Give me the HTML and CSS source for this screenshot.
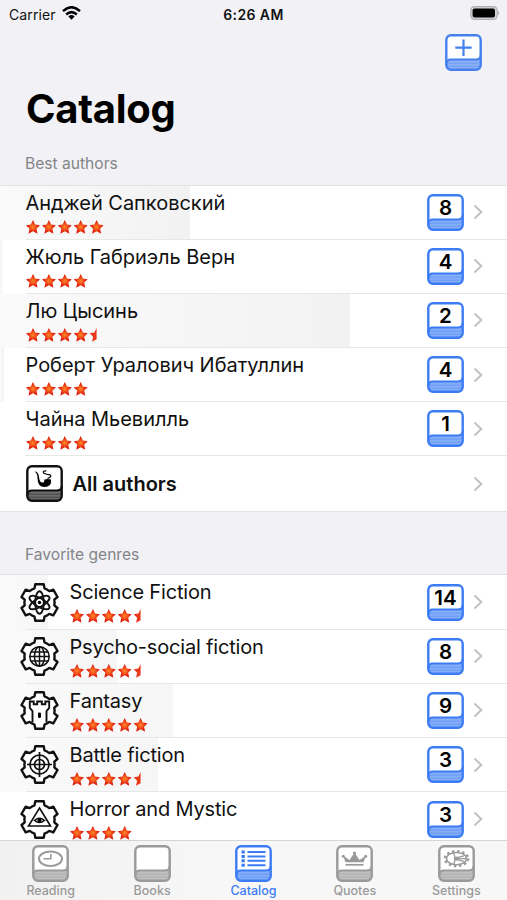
FILE: index.html
```html
<!DOCTYPE html>
<html lang="en">
<head>
  <meta charset="UTF-8">
  <meta name="viewport" content="width=device-width, initial-scale=1.0">
  <title>Catalog</title>
  <link rel="stylesheet" href="styles.css">
</head>
<body>
  <!-- Shared icons -->
  <svg class="defs" width="0" height="0">
    <defs>
      <radialGradient id="fire">
        <stop offset="0" stop-color="#ff8a2a"/>
        <stop offset="0.35" stop-color="#f4581c"/>
        <stop offset="0.8" stop-color="#dd1f10"/>
      </radialGradient>
    </defs>
    <symbol id="book" viewBox="0 0 37 37">
      <rect x="1.3" y="1.3" width="34.4" height="34.4" rx="4.6" fill="#fff"/>
      <path d="M1.3 30Q1.3 25.6 6 25.6H30.5Q35.7 25.6 35.7 21V31Q35.7 35.7 31 35.7H6Q1.3 35.7 1.3 30Z" fill="currentColor" opacity="0.62"/>
      <path d="M3 29.2H34M3 32.2H34" stroke="currentColor" stroke-width="0.8" opacity="0.5"/>
      <path d="M1.3 30.5Q1.3 25.6 6 25.6H30.5Q35.7 25.6 35.7 21" fill="none" stroke="currentColor" stroke-width="2"/>
      <rect x="1.3" y="1.3" width="34.4" height="34.4" rx="4.6" fill="none" stroke="currentColor" stroke-width="2.4"/>
    </symbol>
    <symbol id="gear" viewBox="-19.5 -19.5 39 39">
      <path d="M-4.2-18.3H4.2L5-14.2Q7.5-13.2 9.8-11.4L13.8-12.8L18-5.5L14.8-2.8Q15.3 0 14.8 2.8L18 5.5L13.8 12.8L9.8 11.4Q7.5 13.2 5 14.2L4.2 18.3H-4.2L-5 14.2Q-7.5 13.2-9.8 11.4L-13.8 12.8L-18 5.5L-14.8 2.8Q-15.3 0-14.8-2.8L-18-5.5L-13.8-12.8L-9.8-11.4Q-7.5-13.2-5-14.2Z" fill="#fff" stroke="#111" stroke-width="2.4" stroke-linejoin="round"/>
    </symbol>
    <symbol id="star" viewBox="0 0 14 14">
      <path d="M7 0L9.200 4.600L14 5.200L10.500 8.700L11.500 13.800L7 11.300L2.500 13.800L3.500 8.700L0 5.200L4.800 4.600Z" fill="url(#fire)"/>
    </symbol>
    <symbol id="stars4" viewBox="0 0 78 14">
      <use href="#star" width="14" height="14"/>
      <use href="#star" x="15.9" width="14" height="14"/>
      <use href="#star" x="31.8" width="14" height="14"/>
      <use href="#star" x="47.7" width="14" height="14"/>
    </symbol>
    <symbol id="stars45" viewBox="0 0 78 14">
      <use href="#stars4" width="78" height="14"/>
      <path transform="translate(63.6)" d="M7 0L4.800 4.600L0 5.200L3.500 8.700L2.500 13.800L7 11.300Z" fill="#e8381a"/>
    </symbol>
    <symbol id="stars5" viewBox="0 0 78 14">
      <use href="#stars4" width="78" height="14"/>
      <use href="#star" x="63.6" width="14" height="14"/>
    </symbol>
    <symbol id="chevron" viewBox="0 0 10 16">
      <path d="M1.5 1.5L8.3 8L1.5 14.5" fill="none" stroke="#c2c2c5" stroke-width="2"/>
    </symbol>
  </svg>

  <!-- Status Bar -->
  <div class="status-bar">
    <div class="carrier">Carrier
      <svg width="19" height="14" viewBox="0 0 19 14">
        <g fill="none" stroke="#000" stroke-width="2.5">
          <path d="M1 5.2Q9.5-2.7 18 5.2"/>
          <path d="M4.2 8.5Q9.5 3.7 14.8 8.5"/>
        </g>
        <path d="M6.4 10.4Q9.5 7.7 12.6 10.4L9.5 13.7Z"/>
      </svg>
    </div>
    <div class="time">6:26 AM</div>
    <svg class="battery" width="30" height="14" viewBox="0 0 30 14">
      <rect x=".8" y=".6" width="26.4" height="12.8" rx="3.8" fill="#d4d4d6" stroke="#b0b0b3" stroke-width="1.2"/>
      <rect x="2.6" y="2.4" width="22.4" height="9.2" rx="2"/>
      <path d="M28.3 4.8Q30.5 7 28.3 9.200Z" fill="#a5a5a8"/>
    </svg>
  </div>

  <!-- Header -->
  <header>
    <svg class="add" width="37" height="37">
      <use href="#book" width="37" height="37"/>
      <path d="M18.5 5.5V22M10.3 13.7H26.7" stroke="currentColor" stroke-width="2.2"/>
    </svg>
    <h1>Catalog</h1>
  </header>

  <main>
    <h2>Best authors</h2>
    <ul class="list">
      <li class="row" style="--fill: 190px">
        <div class="cell">
          <div class="info"><p>Анджей Сапковский</p><svg class="stars"><use href="#stars5"/></svg></div>
          <svg class="count"><use href="#book"/><text x="18.5" y="21">8</text></svg>
          <svg class="chevron"><use href="#chevron"/></svg>
        </div>
      </li>
      <li class="row" style="--fill: 2px">
        <div class="cell">
          <div class="info"><p>Жюль Габриэль Верн</p><svg class="stars"><use href="#stars4"/></svg></div>
          <svg class="count"><use href="#book"/><text x="18.5" y="21">4</text></svg>
          <svg class="chevron"><use href="#chevron"/></svg>
        </div>
      </li>
      <li class="row" style="--fill: 350px">
        <div class="cell">
          <div class="info"><p>Лю Цысинь</p><svg class="stars"><use href="#stars45"/></svg></div>
          <svg class="count"><use href="#book"/><text x="18.5" y="21">2</text></svg>
          <svg class="chevron"><use href="#chevron"/></svg>
        </div>
      </li>
      <li class="row" style="--fill: 4px">
        <div class="cell">
          <div class="info"><p>Роберт Уралович Ибатуллин</p><svg class="stars"><use href="#stars4"/></svg></div>
          <svg class="count"><use href="#book"/><text x="18.5" y="21">4</text></svg>
          <svg class="chevron"><use href="#chevron"/></svg>
        </div>
      </li>
      <li class="row" style="--fill: 0px">
        <div class="cell">
          <div class="info"><p>Чайна Мьевилль</p><svg class="stars"><use href="#stars4"/></svg></div>
          <svg class="count"><use href="#book"/><text x="18.5" y="21">1</text></svg>
          <svg class="chevron"><use href="#chevron"/></svg>
        </div>
      </li>
      <li class="row" style="--fill: 0px">
        <div class="cell all">
          <svg class="pipe" width="37" height="37">
            <use href="#book" width="37" height="37"/>
            <path d="M8.500 6.500Q12.500 6.500 13 12Q13.500 18 17 17.500Q18.500 17 18.500 14.500Q21.500 13.500 25 14.500Q26 22 18.500 22Q11.500 22 11.500 13Q11.500 8 8.500 6.500Z"/>
            <path d="M21.500 13.500Q26.500 11.500 24 9.800Q20.500 9.500 17.500 8Q16.500 5.500 20.500 6" fill="none" stroke="#000" stroke-width="1.2"/>
          </svg>
          <strong>All authors</strong>
          <svg class="chevron"><use href="#chevron"/></svg>
        </div>
      </li>
    </ul>

    <h2 class="second">Favorite genres</h2>
    <ul class="list genres">
      <li class="row" style="--fill: 48px">
        <div class="cell">
          <svg class="genre" viewBox="-19.5 -19.5 39 39">
            <use href="#gear" x="-19.5" y="-19.5" width="39" height="39"/>
            <g fill="none" stroke="#111" stroke-width="1.9">
              <ellipse rx="4.3" ry="11.3"/>
              <ellipse rx="4.3" ry="11.3" transform="rotate(60)"/>
              <ellipse rx="4.3" ry="11.3" transform="rotate(120)"/>
              <circle r="4.6"/>
            </g>
            <circle r="1.7"/>
          </svg>
          <div class="info"><p>Science Fiction</p><svg class="stars"><use href="#stars45"/></svg></div>
          <svg class="count"><use href="#book"/><text x="18.5" y="21">14</text></svg>
          <svg class="chevron"><use href="#chevron"/></svg>
        </div>
      </li>
      <li class="row" style="--fill: 117px">
        <div class="cell">
          <svg class="genre" viewBox="-19.5 -19.5 39 39">
            <use href="#gear" x="-19.5" y="-19.5" width="39" height="39"/>
            <g fill="none" stroke="#111" stroke-width="1.5">
              <circle r="9.7"/>
              <ellipse rx="5" ry="9.7"/>
              <path d="M0-9.7V9.7M-9.7 0H9.7M-8.6-4.5H8.6M-8.6 4.5H8.6"/>
            </g>
          </svg>
          <div class="info"><p>Psycho-social fiction</p><svg class="stars"><use href="#stars45"/></svg></div>
          <svg class="count"><use href="#book"/><text x="18.5" y="21">8</text></svg>
          <svg class="chevron"><use href="#chevron"/></svg>
        </div>
      </li>
      <li class="row" style="--fill: 173px">
        <div class="cell">
          <svg class="genre" viewBox="-19.5 -19.5 39 39">
            <use href="#gear" x="-19.5" y="-19.5" width="39" height="39"/>
            <path d="M-7 12V.5L-9.7-2.500V-9H-5.800V-6.200H-2.300V-9H2.300V-6.200H5.800V-9H9.700V-2.500L7 .5V12" fill="none" stroke="#111" stroke-width="1.9"/>
            <rect x="-1.500" y="2" width="3" height="5.500" rx="1.200"/>
          </svg>
          <div class="info"><p>Fantasy</p><svg class="stars"><use href="#stars5"/></svg></div>
          <svg class="count"><use href="#book"/><text x="18.5" y="21">9</text></svg>
          <svg class="chevron"><use href="#chevron"/></svg>
        </div>
      </li>
      <li class="row" style="--fill: 158px">
        <div class="cell">
          <svg class="genre" viewBox="-19.5 -19.5 39 39">
            <use href="#gear" x="-19.5" y="-19.5" width="39" height="39"/>
            <g fill="none" stroke="#111" stroke-width="1.7">
              <circle r="9.5"/>
              <circle r="5"/>
              <path d="M0-12.5V12.5M-12.5 0H12.5"/>
            </g>
          </svg>
          <div class="info"><p>Battle fiction</p><svg class="stars"><use href="#stars45"/></svg></div>
          <svg class="count"><use href="#book"/><text x="18.5" y="21">3</text></svg>
          <svg class="chevron"><use href="#chevron"/></svg>
        </div>
      </li>
      <li class="row" style="--fill: 0px">
        <div class="cell">
          <svg class="genre" viewBox="-19.5 -19.5 39 39">
            <use href="#gear" x="-19.5" y="-19.5" width="39" height="39"/>
            <g fill="none" stroke="#111" stroke-width="1.6">
              <path d="M0-11.500L11 6.500H-11Z"/>
              <path d="M-5 1Q0-3.5 5 1Q0 5-5 1Z"/>
            </g>
            <circle cy=".8" r="2"/>
          </svg>
          <div class="info"><p>Horror and Mystic</p><svg class="stars"><use href="#stars4"/></svg></div>
          <svg class="count"><use href="#book"/><text x="18.5" y="21">3</text></svg>
          <svg class="chevron"><use href="#chevron"/></svg>
        </div>
      </li>
    </ul>
  </main>

  <!-- Tab Bar -->
  <nav class="tab-bar">
    <a>
      <svg width="37" height="37">
        <use href="#book" width="37" height="37"/>
        <ellipse cx="18.5" cy="13.7" rx="11.5" ry="7.3" fill="none" stroke="currentColor" stroke-width="2"/>
        <path d="M11.5 13.700H18.800V9" fill="none" stroke="currentColor" stroke-width="1.6"/>
      </svg>
      Reading
    </a>
    <a>
      <svg width="37" height="37"><use href="#book" width="37" height="37"/></svg>
      Books
    </a>
    <a class="active">
      <svg width="37" height="37">
        <use href="#book" width="37" height="37"/>
        <path d="M6.5 7H9.8M6.5 11.500H9.8M6.5 15.800H9.8M6.5 20.200H9.8" stroke="currentColor" stroke-width="3"/>
        <path d="M12.5 7H30.500M12.5 11.500H30.500M12.5 15.800H30.500M12.5 20.200H30.500" stroke="currentColor" stroke-width="1.9"/>
      </svg>
      Catalog
    </a>
    <a>
      <svg width="37" height="37">
        <use href="#book" width="37" height="37"/>
        <path d="M9.500 17.2L7 10.5L13.500 15L18.500 7.5L23.500 15L30 10.5L27.500 17.2Z" fill="currentColor"/>
        <path d="M9.500 19.8H27.500" stroke="currentColor" stroke-width="1.7"/>
        <g fill="currentColor"><circle cx="7.3" cy="11.2" r="1.5"/><circle cx="18.5" cy="8" r="1.600"/><circle cx="29.7" cy="11.2" r="1.5"/></g>
      </svg>
      Quotes
    </a>
    <a>
      <svg width="37" height="37">
        <use href="#book" width="37" height="37"/>
        <g fill="none" stroke="currentColor">
          <ellipse cx="18.5" cy="13.6" rx="11.7" ry="7.4" stroke-width="2.4" stroke-dasharray="2.4 2.7"/>
          <ellipse cx="18.5" cy="13.6" rx="10" ry="6.200" stroke-width="1.5"/>
          <path d="M15.5 8Q18.5 13.6 15.500 19.2M17 13.6H28M18 12.800L26 10.800M18 14.400L26 16.400" stroke-width="1.2"/>
          <circle cx="18" cy="13.6" r="1.6" stroke-width="1.2"/>
        </g>
      </svg>
      Settings
    </a>
  </nav>
</body>
</html>
```
FILE: styles.css
```css
* {
  box-sizing: border-box;
  margin: 0;
  padding: 0;
}

body {
  font-family: Inter, "Liberation Sans", sans-serif;
  background: #f1f1f6;
  color: #111;
  height: 900px;
  display: flex;
  flex-direction: column;
  overflow: hidden;
}

svg {
  flex-shrink: 0;
  display: block;
}

.defs {
  position: absolute;
}

/* Status Bar */
.status-bar {
  display: grid;
  grid-template-columns: 1fr auto 1fr;
  align-items: center;
  height: 28px;
  padding: 0 7px 0 9px;
  font-size: 14px;
}

.carrier {
  display: flex;
  align-items: center;
  gap: 6px;
  letter-spacing: 0.1px;
}

.carrier svg {
  margin-top: -3px;
}

.time {
  font-weight: 600;
  letter-spacing: 0.4px;
  margin-right: 2px;
}

.battery {
  justify-self: end;
  margin-top: -2px;
}

/* Header */
header {
  height: 106px;
  padding: 6px 25px 0 26px;
}

.add {
  margin-left: auto;
  color: #4480f0;
}

h1 {
  font-size: 40px;
  line-height: 48px;
  margin-top: 14px;
  letter-spacing: -0.3px;
  color: #000;
}

main {
  flex: 1;
  min-height: 0;
  overflow: hidden;
}

h2 {
  height: 50.5px;
  padding: 20px 25px 0;
  font-size: 15.6px;
  line-height: 19px;
  font-weight: 400;
  color: #858589;
}

h2.second {
  height: 62.8px;
  padding-top: 33px;
}

/* Lists */
.list {
  list-style: none;
  border-top: 1px solid #e2e2e6;
  border-bottom: 1px solid #e2e2e6;
  background: #fff;
}

/* shaded part of the row shows the share */
.row {
  height: 54.2px;
  padding-left: 25.5px;
  background: linear-gradient(to right, #fafafa, #f2f2f2) no-repeat;
  background-size: var(--fill) 100%;
}

.genres .row {
  background-image: linear-gradient(to right, #fafafa, #f6f6f6);
}

.cell {
  height: 100%;
  display: flex;
  align-items: center;
  padding-right: 24px;
  border-bottom: 1px solid #e7e7e9;
}

.row:last-child .cell {
  border-bottom: none;
}

.info {
  flex: 1;
  align-self: flex-start;
  padding-top: 5px;
}

.info p {
  font-size: 20px;
  line-height: 25px;
  letter-spacing: -0.03px;
  white-space: nowrap;
}

.genres .info p {
  letter-spacing: -0.18px;
}

.stars {
  width: 78px;
  height: 14px;
  margin-top: 4px;
}

.genre {
  width: 39px;
  height: 39px;
  margin: 0 11px 0 -6px;
}

.count {
  width: 37px;
  height: 37px;
  color: #3b7cf5;
}

.count text {
  font-size: 20.5px;
  font-weight: 600;
  text-anchor: middle;
  fill: #000;
}

.chevron {
  width: 10px;
  height: 16px;
  margin-left: 9px;
}

.all strong {
  flex: 1;
  padding-left: 10px;
  font-size: 20px;
  font-weight: 600;
}

/* Tab Bar */
.tab-bar {
  height: 60px;
  display: grid;
  grid-template-columns: repeat(5, 1fr);
  border-top: 1px solid #d5d5d7;
  background: linear-gradient(to right, #f1f1f1, #f7f7f7 45%);
}

.tab-bar a {
  display: flex;
  flex-direction: column;
  align-items: center;
  padding-top: 4px;
  font-size: 12.5px;
  line-height: 18px;
  font-weight: 500;
  color: #9a9a9a;
}

.tab-bar .active {
  color: #3b7cf5;
}
```
